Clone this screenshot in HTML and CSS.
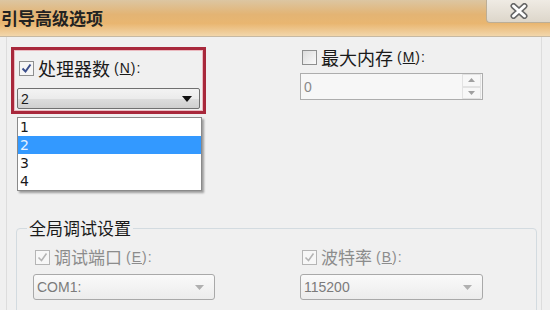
FILE: index.html
```html
<!DOCTYPE html>
<html lang="zh-CN">
<head>
    <meta charset="UTF-8">
    <title>引导高级选项</title>
    <link rel="stylesheet" href="styles.css">
</head>
<body>
    <div class="window">
        <div class="titlebar">
            <span class="title">引导高级选项</span>
            <div class="close">
                <svg width="20" height="16" viewBox="0 0 20 16">
                    <path d="M4.5 3 L15.5 13 M15.5 3 L4.5 13" stroke="#666666" stroke-width="6" stroke-linecap="round"/>
                    <path d="M4.5 3 L15.5 13 M15.5 3 L4.5 13" stroke="#ffffff" stroke-width="3" stroke-linecap="round"/>
                </svg>
            </div>
        </div>

        <div class="content">
            <div class="top-row">
                <div class="col-left">
                    <div class="highlight">
                        <label class="check">
                            <span class="box checked">
                                <svg width="11" height="11" viewBox="0 0 11 11"><path d="M1.5 5.5 L4.5 8.5 L9.5 1.5" fill="none" stroke="#3c4f8c" stroke-width="2"/></svg>
                            </span>
                            <span>处理器数</span><span class="key">(<u>N</u>):</span>
                        </label>
                        <div class="select active">
                            <span>2</span>
                            <svg width="10" height="6" viewBox="0 0 10 6"><path d="M0 0 L10 0 L5 6 Z" fill="#111"/></svg>
                        </div>
                    </div>
                    <ul class="dropdown">
                        <li>1</li>
                        <li class="selected">2</li>
                        <li>3</li>
                        <li>4</li>
                    </ul>
                </div>
                <div class="col-right">
                    <label class="check">
                        <span class="box"></span>
                        <span>最大内存</span><span class="key">(<u>M</u>):</span>
                    </label>
                    <div class="spin">
                        <span>0</span>
                        <div class="spin-btns">
                            <span><svg width="7" height="4" viewBox="0 0 7 4"><path d="M0 4 L3.5 0 L7 4 Z" fill="#a0a0a0"/></svg></span>
                            <span><svg width="7" height="4" viewBox="0 0 7 4"><path d="M0 0 L7 0 L3.5 4 Z" fill="#a0a0a0"/></svg></span>
                        </div>
                    </div>
                </div>
            </div>

            <fieldset class="group">
                <legend>全局调试设置</legend>
                <div class="group-row">
                    <div class="group-col first">
                        <label class="check disabled">
                            <span class="box checked">
                                <svg width="11" height="11" viewBox="0 0 11 11"><path d="M1.5 5.5 L4.5 8.5 L9.5 1.5" fill="none" stroke="#b4b4b4" stroke-width="1.6"/></svg>
                            </span>
                            <span>调试端口</span><span class="key">(<u>E</u>):</span>
                        </label>
                        <div class="select disabled">
                            <span>COM1:</span>
                            <svg width="9" height="5" viewBox="0 0 9 5"><path d="M0 0 L9 0 L4.5 5 Z" fill="#b0b0b0"/></svg>
                        </div>
                    </div>
                    <div class="group-col">
                        <label class="check disabled">
                            <span class="box checked">
                                <svg width="11" height="11" viewBox="0 0 11 11"><path d="M1.5 5.5 L4.5 8.5 L9.5 1.5" fill="none" stroke="#b4b4b4" stroke-width="1.6"/></svg>
                            </span>
                            <span>波特率</span><span class="key">(<u>B</u>):</span>
                        </label>
                        <div class="select disabled wide">
                            <span>115200</span>
                            <svg width="9" height="5" viewBox="0 0 9 5"><path d="M0 0 L9 0 L4.5 5 Z" fill="#b0b0b0"/></svg>
                        </div>
                    </div>
                </div>
            </fieldset>
        </div>
    </div>
</body>
</html>
```

FILE: styles.css
```css
body {
    margin: 0;
    font-family: "Noto Sans CJK SC", "Liberation Sans", sans-serif;
    color: #1a1a1a;
}
.window {
    width: 550px;
    height: 310px;
    overflow: hidden;
    background-color: #f0f0f0;
}
.titlebar {
    height: 36px;
    display: flex;
    justify-content: space-between;
    align-items: flex-start;
    border-bottom: 1px solid #c7b9a2;
    background: linear-gradient(#dcc6a2 0%, #e3b474 40%, #e9b670 65%, #f2d6ab 100%);
}
.title {
    font-size: 17px;
    font-weight: 700;
    line-height: 35px;
    padding-left: 1px;
    color: #222;
}
.close {
    width: 64px;
    height: 23px;
    box-sizing: border-box;
    border-left: 1px solid #bcae96;
    border-bottom: 1px solid #bcae96;
    border-bottom-left-radius: 4px;
    background: linear-gradient(#efebe4, #ddd6ca);
    display: flex;
    justify-content: center;
    align-items: center;
}
.content {
    margin: 0 8px 0 6px;
    height: 273px;
    border-left: 1px solid #dddddd;
    border-right: 1px solid #dddddd;
}
.top-row {
    display: flex;
    padding-top: 10px;
}
.col-left {
    width: 293px;
    box-sizing: border-box;
    padding-left: 4px;
    position: relative;
}
.highlight {
    width: 195px;
    height: 67px;
    box-sizing: border-box;
    border: 3px solid #a8283b;
    box-shadow: inset 0 0 0 1px #eab9bf;
    padding: 8px 3px 0;
}
.check {
    display: flex;
    align-items: center;
    height: 20px;
    font-size: 18px;
    line-height: 20px;
}
.check .box {
    width: 13px;
    height: 13px;
    border: 1px solid #8e8f8f;
    background: linear-gradient(135deg, #dcdcdc, #fafafa);
    margin: 0 4px 0 2px;
    display: flex;
    justify-content: center;
    align-items: center;
    flex-shrink: 0;
}
.check .box.checked {
    background: #f6f6f6;
}
.check .key {
    font-family: "Liberation Sans", sans-serif;
    font-size: 14px;
    margin-left: 4px;
    letter-spacing: 1px;
}
.highlight .select {
    margin-top: 10px;
}
.select {
    height: 21px;
    box-sizing: border-box;
    display: flex;
    justify-content: space-between;
    align-items: center;
    padding: 0 7px 0 3px;
    font-family: "Liberation Sans", sans-serif;
    font-size: 14px;
}
.select.active {
    border: 1px solid #707070;
    border-radius: 2px;
    background: linear-gradient(#f3f3f3 0%, #ebebeb 50%, #dddddd 51%, #cfcfcf 100%);
}
.dropdown {
    position: absolute;
    left: 10px;
    top: 70px;
    width: 183px;
    margin: 0;
    padding: 0;
    list-style: none;
    background: #ffffff;
    border: 1px solid #8a8a8a;
    box-shadow: 2px 2px 2px rgba(0, 0, 0, 0.35);
    font-family: "DejaVu Sans", sans-serif;
    font-size: 14px;
}
.dropdown li {
    height: 18px;
    line-height: 18px;
    padding-left: 2px;
}
.dropdown li.selected {
    background-color: #3399ff;
    color: #e6f2ff;
}
.col-right {
    flex: 1;
}
.spin {
    width: 183px;
    height: 27px;
    box-sizing: border-box;
    margin-top: 6px;
    border: 1px solid #adadad;
    background: #f7f7f7;
    display: flex;
    justify-content: space-between;
    align-items: center;
    padding-left: 3px;
    font-family: "Liberation Sans", sans-serif;
    font-size: 14px;
    color: #8a8a8a;
}
.spin-btns {
    width: 19px;
    height: 25px;
    display: flex;
    flex-direction: column;
    margin-right: 1px;
}
.spin-btns span {
    flex: 1;
    display: flex;
    justify-content: center;
    align-items: center;
    border: 1px solid #e2e2e2;
}
.group {
    margin: 102px 0 0 9px;
    width: 521px;
    box-sizing: border-box;
    padding: 0 0 0 10px;
    border: 1px solid #d3dbe0;
    border-radius: 4px;
    height: 120px;
}
.group legend {
    padding: 0 2px;
    font-size: 17px;
    line-height: 24px;
}
.group-row {
    display: flex;
    padding-top: 7px;
}
.group-col.first {
    width: 273px;
    box-sizing: border-box;
    padding-left: 6px;
}
.check.disabled {
    font-size: 17px;
    color: #8c8c8c;
}
.check.disabled .box {
    border-color: #b5b5b5;
    background: #f7f7f7;
}
.select.disabled {
    width: 182px;
    height: 26px;
    margin-top: 7px;
    border: 1px solid #a9a9a9;
    border-radius: 3px;
    background: linear-gradient(#fafafa, #ececec);
    color: #7b7b7b;
    font-size: 14px;
    padding-right: 10px;
}
.select.wide {
    width: 183px;
}
```
